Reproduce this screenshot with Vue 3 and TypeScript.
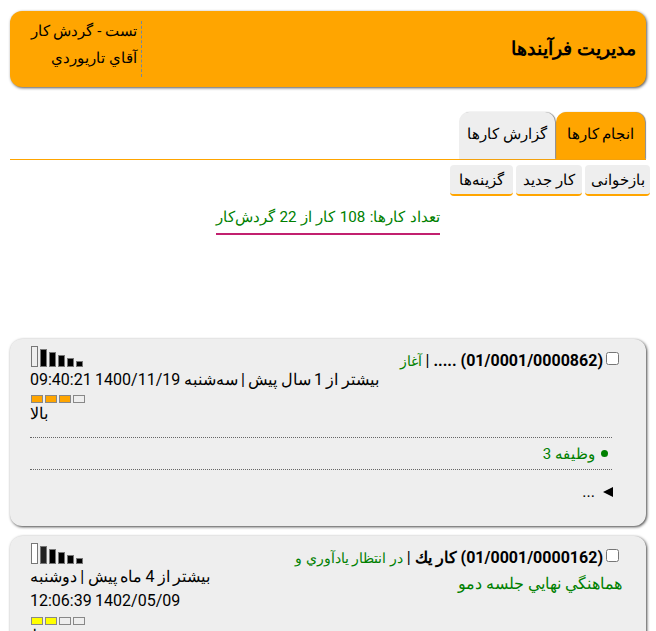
<script setup lang="ts">
interface Bar { h: number; fill: string }
const makeBars = (second: string, first: string): Bar[] => [
  { h: 21, fill: first },
  { h: 18, fill: second },
  { h: 15, fill: '#000' },
  { h: 12, fill: '#000' },
  { h: 9, fill: '#000' },
  { h: 6, fill: '#000' },
]
const bars1 = makeBars('#000', 'transparent')
const bars2 = makeBars('#222', '#fff')
const prio1 = ['#ffa500', '#ffa500', '#ffa500', 'transparent']
const prio2 = ['#ffff00', '#ffff00', 'transparent', 'transparent']
</script>

<template>
  <div class="page">
    <header class="head">
      <h1 class="title">مدیریت فرآیندها</h1>
      <div class="who">
        <div>تست - گردش کار</div>
        <div>آقاي تاريوردي</div>
      </div>
    </header>

    <nav class="tabs">
      <a class="tab active">انجام کارها</a>
      <a class="tab">گزارش کارها</a>
    </nav>

    <div class="actions">
      <button class="act a1">بازخوانی</button>
      <button class="act a2">کار جدید</button>
      <button class="act a3">گزینه‌ها</button>
    </div>

    <div class="count-wrap">
      <div class="count">تعداد کارها: 108 کار از 22 گردش‌کار</div>
    </div>

    <section class="card first">
      <div class="top">
        <div class="main">
          <input class="check" type="checkbox" />
          <span><b>(01/0001/0000862) .....</b> | <span class="green status">آغاز</span></span>
        </div>
        <div class="side">
          <div class="signal">
            <i v-for="(b, i) in bars1" :key="i" :style="{ height: b.h + 'px', background: b.fill }"></i>
          </div>
          <div class="when">بیشتر از 1 سال پیش | سه‌شنبه 1400/11/19 09:40:21</div>
          <div class="prio">
            <i v-for="(c, i) in prio1" :key="i" :style="{ background: c }"></i>
          </div>
          <div class="level">بالا</div>
        </div>
      </div>
      <div class="task green"><span class="dot"></span>وظیفه 3</div>
      <div class="more"><span class="tri"></span><span>...</span></div>
    </section>

    <section class="card">
      <div class="top">
        <div class="main">
          <div>
            <input class="check" type="checkbox" />
            <span><b>(01/0001/0000162) کار يك</b> | <span class="green status">در انتظار يادآوري و</span></span>
          </div>
          <div class="green sub">هماهنگي نهايي جلسه دمو</div>
        </div>
        <div class="side">
          <div class="signal">
            <i v-for="(b, i) in bars2" :key="i" :style="{ height: b.h + 'px', background: b.fill }"></i>
          </div>
          <div class="when">بیشتر از 4 ماه پیش | دوشنبه</div>
          <div class="when">1402/05/09 12:06:39</div>
          <div class="prio">
            <i v-for="(c, i) in prio2" :key="i" :style="{ background: c }"></i>
          </div>
          <div class="level">متوسط</div>
        </div>
      </div>
    </section>
  </div>
</template>

<style>
html, body { margin: 0; height: 631px; overflow: hidden; background: #fff; }
</style>

<style scoped>
.page {
  direction: rtl;
  font-family: Roboto, sans-serif;
  font-size: 16px;
  line-height: 24px;
  color: #000;
  padding: 11px 10px 0;
}
.head {
  height: 76px;
  box-sizing: border-box;
  background: #ffa500;
  border-radius: 12px;
  box-shadow: 1px 1px 3px #555;
  display: flex;
  justify-content: space-between;
  align-items: center;
  padding: 0 10px 0 20px;
}
.title { margin: 0; font-size: 19px; font-weight: 700; }
.who {
  width: 107px;
  height: 56px;
  border-right: 1px dashed #778899;
  padding-right: 4px;
  font-size: 15px;
  line-height: 21px;
  display: grid;
  align-content: start;
  row-gap: 6px;
  white-space: nowrap;
}
.tabs {
  margin-top: 25px;
  height: 48px;
  box-sizing: border-box;
  border-bottom: 1px solid #ffa500;
  display: flex;
  gap: 1px;
  padding-right: 1px;
}
.tab {
  height: 47px;
  box-sizing: border-box;
  width: 96px;
  padding-top: 10px;
  text-align: center;
  font-size: 15px;
  border-radius: 10px 10px 0 0;
  background: #eee;
  box-shadow: 1px 0 1px #888;
}
.tab.active { background: #ffa500; width: 89px; }
.actions {
  display: flex;
  gap: 3px;
  margin-top: 5px;
  margin-right: -4px;
}
.act {
  all: unset;
  height: 31px;
  box-sizing: border-box;
  text-align: center;
  font-size: 15px;
  line-height: 28px;
  background: #eee;
  border-radius: 4px;
  border-bottom: 2px solid #ffa500;
}
.a1 { width: 65px; }
.a2 { width: 66px; }
.a3 { width: 63px; }
.count-wrap { display: flex; justify-content: center; margin-top: 8px; }
.count {
  color: #008000;
  font-size: 15.2px;
  word-spacing: 0.6px;
  height: 29px;
  line-height: 26px;
  border-bottom: 2px solid #c2206f;
}
.card {
  margin-top: 10px;
  background: #eee;
  border-radius: 12px;
  box-shadow: 1px 1px 3px #444;
  padding: 7px 24px 0 20px;
  height: 187px;
  box-sizing: border-box;
}
.card.first { margin-top: 104px; }
.top { display: flex; justify-content: space-between; align-items: flex-start; }
.main { padding-top: 3px; }
.check { width: 13px; height: 13px; margin: 0 3px 0 3px; vertical-align: 1px; }
.status { font-size: 14.4px; }
.green { color: #008000; }
.sub { margin-top: 1px; }
.side { text-align: left; }
.signal { display: flex; direction: ltr; align-items: flex-end; gap: 2px; height: 21px; padding-left: 1px; margin-bottom: 1px; }
.signal i { display: block; width: 7px; box-sizing: border-box; border: 1px solid #777; }
.when { line-height: 24px; word-spacing: -0.6px; }
.when + .when { padding-bottom: 1px; }
.prio { display: flex; direction: ltr; gap: 2px; margin-top: 3px; padding-left: 1px; }
.prio i { display: block; width: 12px; height: 8px; box-sizing: border-box; border: 1px solid #888; }
.level { line-height: 22px; }
.task {
  margin-top: 12px;
  margin-right: 10px;
  height: 33px;
  box-sizing: border-box;
  border-top: 1px dotted #666;
  border-bottom: 1px dotted #666;
  display: flex;
  align-items: center;
  font-size: 15px;
}
.dot { width: 7px; height: 7px; border-radius: 50%; background: #008000; margin: 0 4px 0 6px; }
.more { display: flex; align-items: center; gap: 8px; margin-top: 10px; margin-right: 9px; }
.tri { width: 0; height: 0; border-style: solid; border-width: 5px 10px 5px 0; border-color: transparent #000 transparent transparent; }
</style>
